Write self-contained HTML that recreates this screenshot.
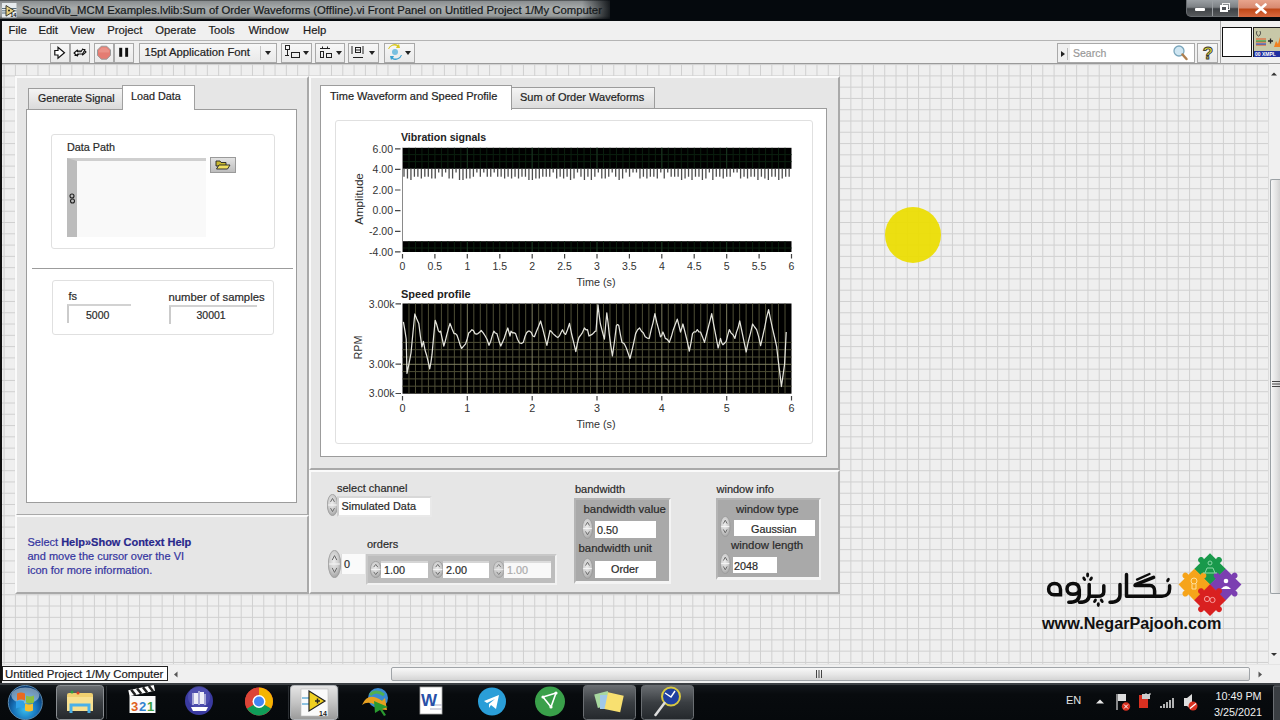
<!DOCTYPE html>
<html><head><meta charset="utf-8">
<style>
*{margin:0;padding:0;box-sizing:border-box}
html,body{width:1280px;height:720px;overflow:hidden;background:#05080b;font-family:"Liberation Sans",sans-serif;color:#222}
.a{position:absolute}
.t,.mi,.lbl{-webkit-text-stroke:0.2px currentColor}

.t{position:absolute;white-space:nowrap;line-height:1}
#title{left:0;top:0;width:1280px;height:21px;background:#05090d}
#glow{left:0;top:0;width:610px;height:19px;background:linear-gradient(180deg,#3c4042 0,#8c9092 8%,#a9adad 45%,#959999 85%,#4a4c4e 100%);}
#glowfade{left:582px;top:0;width:32px;height:19px;background:linear-gradient(90deg,rgba(5,9,13,0),#05090d)}
#menu{left:2px;top:21px;width:1218px;height:20px;background:#f0f0f0;border-bottom:1px solid #b4b4b4}
#tool{left:2px;top:41px;width:1218px;height:23px;background:#f0f0f0;border-bottom:1px solid #9a9a9a}
#iconarea{left:1220px;top:21px;width:60px;height:43px;background:#f0f0f0;border-left:1px solid #a8a8a8;border-bottom:1px solid #9a9a9a}
.tb{position:absolute;top:43px;height:20px;border:1px solid #a9a9a9;background:linear-gradient(#f7f7f7,#e9e9e9)}
#canvas{left:2px;top:64px;width:1266px;height:602px;background:#efefef;overflow:hidden}
.panel{position:absolute;background:#e6e6e6;border-top:2px solid #fafafa;border-left:2px solid #fafafa;border-right:2px solid #a9a9a9;border-bottom:2px solid #a9a9a9}
.page{position:absolute;background:#fff;border:1px solid #9c9c9c}
.tab{position:absolute;border:1px solid #9c9c9c;border-bottom:none;background:linear-gradient(#f4f4f4,#dadada);font-size:11px}
.tab.on{background:#fff}
.clus{position:absolute;border:1px solid #e0e0e0;border-radius:3px;background:#fff}
.mi{position:absolute;top:25px;font-size:11.3px;line-height:1;white-space:nowrap;color:#1c1c1c}
.spin{position:absolute;border-radius:50%;background:radial-gradient(ellipse at 40% 35%,#f4f4f4,#c9c9c9 60%,#9a9a9a);}
.lbl{position:absolute;white-space:nowrap;line-height:1;font-size:11px;color:#2a2a2a}
</style></head><body><svg width="0" height="0" style="position:absolute"><defs><radialGradient id="spg" cx="45%" cy="40%" r="65%"><stop offset="0" stop-color="#ececec"/><stop offset=".55" stop-color="#cdcdcd"/><stop offset="1" stop-color="#9c9c9c"/></radialGradient></defs></svg>
<!-- title bar -->
<div id="title" class="a"></div>
<div id="glow" class="a"></div>
<div id="glowfade" class="a"></div>
<div class="t" style="left:22px;top:4.8px;font-size:11.3px;color:#15191b">SoundVib_MCM Examples.lvlib:Sum of Order Waveforms (Offline).vi Front Panel on Untitled Project 1/My Computer</div>

<!-- menu and toolbar -->
<div id="menu" class="a"></div>
<div id="tool" class="a"></div>
<div id="iconarea" class="a"></div>
<div class="mi" style="left:8.5px">File</div>
<div class="mi" style="left:38.5px">Edit</div>
<div class="mi" style="left:70.3px">View</div>
<div class="mi" style="left:107.2px">Project</div>
<div class="mi" style="left:155.3px">Operate</div>
<div class="mi" style="left:208.4px">Tools</div>
<div class="mi" style="left:248.4px">Window</div>
<div class="mi" style="left:303px">Help</div>
<!-- toolbar buttons -->
<div class="tb" style="left:50px;width:20px"></div>
<div class="tb" style="left:70px;width:20px"></div>
<div class="tb" style="left:94px;width:20px"></div>
<div class="tb" style="left:114px;width:20px"></div>
<svg class="a" style="left:0;top:40px" width="440" height="26">
 <path d="M54.8 10.5h3.2v-3.3l6.5 5.5-6.5 5.6v-3.3h-3.2z" fill="#fff" stroke="#111" stroke-width="1.2" stroke-linejoin="miter"/>
 <g fill="#fff" stroke="#111" stroke-width="1.1" stroke-linejoin="round">
  <path d="M75 15.5l2.5-4.5h5v-2l3.5 3-3.5 3v-1.8h-3.5l-1.5 2.3z"/>
  <path d="M85 9.5l-2.5 4.5h-5v2l-3.5-3 3.5-3v1.8h3.5l1.5-2.3z"/>
 </g>
 <path d="M101.3 6.2h5.4l3.8 3.8v5.4l-3.8 3.8h-5.4l-3.8-3.8v-5.4z" fill="#e47c72" stroke="#9a9a9a" stroke-width="1"/>
 <path d="M101.8 7.5h4.4l3 3v2h-10.4v-2z" fill="#ec9a90" opacity=".7"/>
 <rect x="119.2" y="7.8" width="3" height="9" fill="#111"/><rect x="125.2" y="7.8" width="2.9" height="9" fill="#111"/>
</svg>
<svg class="a" style="left:2px;top:3px" width="15" height="15">
 <rect x="0" y="0" width="14.5" height="14.5" fill="#e6ebee"/>
 <path d="M0 5.5h14.5M0 7.8h14.5M0 10h5" stroke="#466070" stroke-width="0.9"/>
 <path d="M4 2.5l8.5 5.3-8.5 5.3z" fill="#e8d080" stroke="#2a2a20" stroke-width="0.9"/>
 <circle cx="7" cy="7.5" r="1" fill="#222"/>
 <text x="8.2" y="14.2" font-size="5.5" font-weight="bold" fill="#111" font-family="Liberation Sans">14</text>
</svg>
<div class="tb" style="left:139px;width:138px"></div>
<div class="a" style="left:259.5px;top:46px;width:1px;height:14px;background:#c4c4c4"></div>
<div class="t" style="left:144.5px;top:47px;font-size:11.3px;color:#222">15pt Application Font</div>
<div class="tb" style="left:281px;width:31px"></div>
<div class="tb" style="left:315px;width:30px"></div>
<div class="tb" style="left:348px;width:31px"></div>
<div class="tb" style="left:384px;width:31px"></div>
<svg class="a" style="left:0;top:40px" width="440" height="26">
 <path d="M265 11h6l-3 4z" fill="#222"/>
 <g fill="none" stroke="#222" stroke-width="1">
  <rect x="285.5" y="5.5" width="4" height="4"/><path d="M287.5 10v5M285 15.5h4"/><rect x="291.5" y="12.5" width="8" height="5"/>
  <path d="M320 8.5h10M322.5 8.5v-2M327.5 8.5v-2"/><rect x="320.5" y="11.5" width="3" height="6"/><rect x="326.5" y="13.5" width="5" height="4"/>
  <path d="M352 6v8M363 6v8M355 10h5M353 17.5h10"/><rect x="355.5" y="7.5" width="5" height="5"/>
 </g>
 <path d="M303 11h6l-3 4zM336 11h6l-3 4zM369 11h6l-3 4zM405 11h6l-3 4z" fill="#222"/>
 <path d="M389 9a6 6 0 0 1 8 -3l-1 2 4 0-1-4-1 1a7 7 0 0 0 -10 4z" fill="#d8c820"/>
 <path d="M401 15a6 6 0 0 1 -8 3l1-2-4 0 1 4 1-1a7 7 0 0 0 10 -4z" fill="#3aa0d0"/>
 <circle cx="395" cy="12" r="3" fill="#7ac0e0"/>
</svg>
<!-- search -->
<div class="a" style="left:1057px;top:43px;width:138px;height:20px;border:1px solid #a9a9a9;background:#fff"></div>
<div class="a" style="left:1058px;top:44px;width:12px;height:18px;background:#f0f0f0"></div>
<svg class="a" style="left:1056px;top:43px" width="170" height="22">
 <path d="M5 8v6l4-3z" fill="#222"/><path d="M11.5 5v12" stroke="#bbb"/>
 <circle cx="123" cy="8" r="5" fill="#cfe6f2" stroke="#7aa6bc" stroke-width="1.3"/>
 <path d="M126.5 11.5l4 4.5" stroke="#b08050" stroke-width="2.5" stroke-linecap="round"/>
</svg>
<div class="t" style="left:1073px;top:47.5px;font-size:10.5px;color:#999">Search</div>
<div class="tb" style="left:1197px;width:21px"></div>
<svg class="a" style="left:1197px;top:43px" width="22" height="20"><text x="11" y="16" font-size="17" font-weight="bold" text-anchor="middle" fill="#e8e030" stroke="#333" stroke-width="0.9" font-family="Liberation Sans">?</text></svg>
<!-- connector pane + icon -->
<div class="a" style="left:1222px;top:27px;width:30px;height:30px;background:#fff;border:1.5px solid #111"></div>
<div class="a" style="left:1253px;top:27px;width:27px;height:30px;background:#c8c8a8;border:1px solid #222;border-right:none"></div>
<div class="a" style="left:1254px;top:51px;width:26px;height:6px;background:#2030a0"></div>
<svg class="a" style="left:1253px;top:27px" width="27" height="30">
 <path d="M3 12h10M3 15h10M3 18h10" stroke="#e05020" stroke-width="1.2"/>
 <path d="M3 14h10" stroke="#30a040" stroke-width="1.2"/><path d="M3 17h10" stroke="#3050c0" stroke-width="1.2"/>
 <path d="M15 14h5M17.5 11.5v5" stroke="#222" stroke-width="1.3"/>
 <path d="M21 20l2-6 2 3 2-7v10z" fill="#f08020"/>
 <text x="2" y="29" font-size="5" fill="#fff" font-family="Liberation Sans" font-weight="bold">00 XMPL</text>
 <path d="M4 4a2 3 0 1 0 3 0" stroke="#333" fill="none" stroke-width="0.8"/>
</svg>
<!-- window buttons -->
<div class="a" style="left:1186px;top:0;width:94px;height:17px;border:1px solid #6a6e72;border-top:none;border-radius:0 0 0 5px;background:linear-gradient(#9ba0a4,#7c8084 45%,#3e4246 55%,#56595c)"></div>
<div class="a" style="left:1212px;top:0;width:1px;height:16px;background:#9a9ea2"></div>
<div class="a" style="left:1238px;top:0;width:42px;height:17px;border-left:1px solid #c9a090;background:linear-gradient(#e8a48c,#d88a70 45%,#c04818 55%,#d86a40)"></div>
<div class="a" style="left:1195px;top:8px;width:10px;height:3px;background:#fff;border-radius:1px"></div>
<div class="a" style="left:1222px;top:3px;width:8px;height:7px;border:1.5px solid #eee"></div>
<div class="a" style="left:1219.5px;top:5px;width:8px;height:7px;border:2px solid #fff;background:#50545a"></div>
<svg class="a" style="left:1255px;top:3px" width="12" height="11"><path d="M1.5 1.5l9 8M10.5 1.5l-9 8" stroke="#fff" stroke-width="2.6" stroke-linecap="round"/></svg>
<div class="a" style="left:0;top:21px;width:2px;height:662px;background:#111"></div>

<!-- canvas -->
<div id="canvas" class="a"><svg class="a" style="left:0;top:0" width="1266" height="602"><path stroke="#d0d0d0" stroke-width="1" fill="none" d="M2.10 0V602M13.39 0V602M24.68 0V602M35.97 0V602M47.26 0V602M58.55 0V602M69.84 0V602M81.13 0V602M92.42 0V602M103.71 0V602M115.00 0V602M126.29 0V602M137.58 0V602M148.87 0V602M160.16 0V602M171.45 0V602M182.74 0V602M194.03 0V602M205.32 0V602M216.61 0V602M227.90 0V602M239.19 0V602M250.48 0V602M261.77 0V602M273.06 0V602M284.35 0V602M295.64 0V602M306.93 0V602M318.22 0V602M329.51 0V602M340.80 0V602M352.09 0V602M363.38 0V602M374.67 0V602M385.96 0V602M397.25 0V602M408.54 0V602M419.83 0V602M431.12 0V602M442.41 0V602M453.70 0V602M464.99 0V602M476.28 0V602M487.57 0V602M498.86 0V602M510.15 0V602M521.44 0V602M532.73 0V602M544.02 0V602M555.31 0V602M566.60 0V602M577.89 0V602M589.18 0V602M600.47 0V602M611.76 0V602M623.05 0V602M634.34 0V602M645.63 0V602M656.92 0V602M668.21 0V602M679.50 0V602M690.79 0V602M702.08 0V602M713.37 0V602M724.66 0V602M735.95 0V602M747.24 0V602M758.53 0V602M769.82 0V602M781.11 0V602M792.40 0V602M803.69 0V602M814.98 0V602M826.27 0V602M837.56 0V602M848.85 0V602M860.14 0V602M871.43 0V602M882.72 0V602M894.01 0V602M905.30 0V602M916.59 0V602M927.88 0V602M939.17 0V602M950.46 0V602M961.75 0V602M973.04 0V602M984.33 0V602M995.62 0V602M1006.91 0V602M1018.20 0V602M1029.49 0V602M1040.78 0V602M1052.07 0V602M1063.36 0V602M1074.65 0V602M1085.94 0V602M1097.23 0V602M1108.52 0V602M1119.81 0V602M1131.10 0V602M1142.39 0V602M1153.68 0V602M1164.97 0V602M1176.26 0V602M1187.55 0V602M1198.84 0V602M1210.13 0V602M1221.42 0V602M1232.71 0V602M1244.00 0V602M1255.29 0V602M0 0.60H1266M0 11.88H1266M0 23.16H1266M0 34.44H1266M0 45.72H1266M0 57.00H1266M0 68.28H1266M0 79.56H1266M0 90.84H1266M0 102.12H1266M0 113.40H1266M0 124.68H1266M0 135.96H1266M0 147.24H1266M0 158.52H1266M0 169.80H1266M0 181.08H1266M0 192.36H1266M0 203.64H1266M0 214.92H1266M0 226.20H1266M0 237.48H1266M0 248.76H1266M0 260.04H1266M0 271.32H1266M0 282.60H1266M0 293.88H1266M0 305.16H1266M0 316.44H1266M0 327.72H1266M0 339.00H1266M0 350.28H1266M0 361.56H1266M0 372.84H1266M0 384.12H1266M0 395.40H1266M0 406.68H1266M0 417.96H1266M0 429.24H1266M0 440.52H1266M0 451.80H1266M0 463.08H1266M0 474.36H1266M0 485.64H1266M0 496.92H1266M0 508.20H1266M0 519.48H1266M0 530.76H1266M0 542.04H1266M0 553.32H1266M0 564.60H1266M0 575.88H1266M0 587.16H1266M0 598.44H1266"/></svg></div>


<!-- LEFT PANEL -->
<div class="panel" style="left:15px;top:75.5px;width:294px;height:440.5px"></div>
<div class="tab" style="left:28px;top:88px;width:95px;height:21px;"></div>
<div class="t" style="left:38px;top:93px;font-size:10.6px;color:#1e1e1e">Generate Signal</div>
<div class="page" style="left:26px;top:109px;width:271px;height:394px"></div>
<div class="tab on" style="left:122px;top:85px;width:73px;height:25px;border-color:#a0a0a0"></div>
<div class="t" style="left:131px;top:91px;font-size:10.8px;color:#1e1e1e">Load Data</div>

<!-- left page contents -->
<div class="clus" style="left:50.5px;top:133.5px;width:224px;height:115px"></div>
<div class="lbl" style="left:67px;top:142px;font-size:10.8px">Data Path</div>
<div class="a" style="left:67px;top:158px;width:139px;height:78.5px;background:#f9f9f9;border-top:3px solid #cfcfcf;border-left:10px solid #bcbcbc"></div>
<svg class="a" style="left:68px;top:191.5px" width="8" height="16"><circle cx="4" cy="4" r="2" fill="none" stroke="#222" stroke-width="1.1"/><circle cx="4.5" cy="9" r="2" fill="none" stroke="#222" stroke-width="1.1"/></svg>
<div class="a" style="left:210px;top:157px;width:26px;height:15.5px;border:1px solid #9a9a9a;background:linear-gradient(#e2e2e2,#bdbdbd)"></div>
<svg class="a" style="left:210px;top:157px" width="26" height="16"><path d="M6 4h4l1 1.5h5v3.5h-10z" fill="#c8b830" stroke="#222" stroke-width="0.9"/><path d="M6.5 12l2.5-4h11l-2.5 4z" fill="#f0e060" stroke="#222" stroke-width="0.9"/></svg>
<div class="a" style="left:32px;top:267.5px;width:261px;height:1.2px;background:#9c9c9c"></div>
<div class="clus" style="left:51.5px;top:280px;width:222.5px;height:55px"></div>
<div class="lbl" style="left:68.5px;top:291px;font-size:11px">fs</div>
<div class="a" style="left:67px;top:304px;width:64px;height:19px;border-top:2.5px solid #d2d2d2;border-left:2.5px solid #cbcbcb;background:#fff"></div>
<div class="lbl" style="left:86px;top:309.5px;font-size:10.5px">5000</div>
<div class="lbl" style="left:168.5px;top:292px;font-size:11.3px">number of samples</div>
<div class="a" style="left:168.5px;top:305px;width:88px;height:19px;border-top:2.5px solid #d2d2d2;border-left:2.5px solid #cbcbcb;background:#fff"></div>
<div class="lbl" style="left:196.5px;top:310px;font-size:10.5px">30001</div>

<!-- HELP PANEL -->
<div class="panel" style="left:15px;top:515px;width:294px;height:79px"></div>

<!-- CHART PANEL -->
<div class="panel" style="left:309px;top:75.5px;width:531px;height:394.5px"></div>
<div class="tab" style="left:511px;top:87px;width:144px;height:22px"></div>
<div class="t" style="left:520px;top:92px;font-size:11px;color:#1e1e1e">Sum of Order Waveforms</div>
<div class="page" style="left:320px;top:108px;width:507px;height:349px"></div>
<div class="tab on" style="left:320px;top:85px;width:192px;height:25px"></div>
<div class="t" style="left:330px;top:90.5px;font-size:11px;color:#1e1e1e">Time Waveform and Speed Profile</div>
<div class="clus" style="left:335px;top:120px;width:478px;height:324px"></div>

<!-- CONTROLS PANEL -->
<div class="panel" style="left:309px;top:470px;width:531px;height:124px"></div>
<div class="t" style="left:27.5px;top:534.8px;font-size:11px;line-height:14px;color:#3434a0">Select <b style="color:#28288c">Help&raquo;Show Context Help</b><br>and move the cursor over the VI<br>icon for more information.</div>
<div class="lbl" style="left:337px;top:483px;font-size:11px">select channel</div>
<svg class="a" style="left:326.5px;top:494.0px;" width="11.0" height="22.0"><ellipse cx="5.50" cy="11.00" rx="5.20" ry="10.70" fill="url(#spg)" stroke="#9a9a9a" stroke-width=".8"/><path d="M1.20 11.00H9.80" stroke="#f4f4f4" stroke-width="1.2"/><path d="M3.52 7.92l1.98 -3.52 l1.98 3.52" fill="none" stroke="#6a6a6a" stroke-width="1"/><path d="M3.52 14.08l1.98 3.52 l1.98 -3.52" fill="none" stroke="#6a6a6a" stroke-width="1"/></svg>
<div class="a" style="left:337px;top:495.5px;width:95px;height:21.5px;background:#fff;border:2px solid #e9e9e9;border-top:2px solid #d8d8d8;border-left:2px solid #d0d0d0"></div>
<div class="lbl" style="left:341.5px;top:501px;font-size:10.9px">Simulated Data</div>
<div class="lbl" style="left:367px;top:538.5px;font-size:11px">orders</div>
<svg class="a" style="left:327.5px;top:550.0px;" width="13.0" height="28.0"><ellipse cx="6.50" cy="14.00" rx="6.20" ry="13.70" fill="url(#spg)" stroke="#9a9a9a" stroke-width=".8"/><path d="M1.20 14.00H11.80" stroke="#f4f4f4" stroke-width="1.2"/><path d="M4.16 10.08l2.34 -4.48 l2.34 4.48" fill="none" stroke="#6a6a6a" stroke-width="1"/><path d="M4.16 17.92l2.34 4.48 l2.34 -4.48" fill="none" stroke="#6a6a6a" stroke-width="1"/></svg>
<div class="a" style="left:341px;top:554px;width:24px;height:20px;background:#fafafa;border-left:1px solid #ddd"></div>
<div class="lbl" style="left:344px;top:558.5px;font-size:10.8px">0</div>
<div class="a" style="left:366px;top:553.5px;width:191px;height:31px;background:#bdbdbd;border:2px solid #c8c8c8;border-right-color:#f2f2f2;border-bottom-color:#f2f2f2"></div>
<svg class="a" style="left:369.5px;top:561.0px;" width="11.5" height="17.0"><ellipse cx="5.75" cy="8.50" rx="5.45" ry="8.20" fill="url(#spg)" stroke="#9a9a9a" stroke-width=".8"/><path d="M1.20 8.50H10.30" stroke="#f4f4f4" stroke-width="1.2"/><path d="M3.68 6.12l2.07 -2.72 l2.07 2.72" fill="none" stroke="#6a6a6a" stroke-width="1"/><path d="M3.68 10.88l2.07 2.72 l2.07 -2.72" fill="none" stroke="#6a6a6a" stroke-width="1"/></svg>
<div class="a" style="left:381px;top:561px;width:47px;height:17px;background:#fff;border-top:2px solid #d5d5d5"></div>
<div class="lbl" style="left:384px;top:564.5px;font-size:10.8px">1.00</div>
<svg class="a" style="left:431.5px;top:561.0px;" width="11.5" height="17.0"><ellipse cx="5.75" cy="8.50" rx="5.45" ry="8.20" fill="url(#spg)" stroke="#9a9a9a" stroke-width=".8"/><path d="M1.20 8.50H10.30" stroke="#f4f4f4" stroke-width="1.2"/><path d="M3.68 6.12l2.07 -2.72 l2.07 2.72" fill="none" stroke="#6a6a6a" stroke-width="1"/><path d="M3.68 10.88l2.07 2.72 l2.07 -2.72" fill="none" stroke="#6a6a6a" stroke-width="1"/></svg>
<div class="a" style="left:443px;top:561px;width:46px;height:17px;background:#fff;border-top:2px solid #d5d5d5"></div>
<div class="lbl" style="left:446px;top:564.5px;font-size:10.8px">2.00</div>
<svg class="a" style="left:492.5px;top:561.0px;opacity:.75;" width="11.5" height="17.0"><ellipse cx="5.75" cy="8.50" rx="5.45" ry="8.20" fill="url(#spg)" stroke="#9a9a9a" stroke-width=".8"/><path d="M1.20 8.50H10.30" stroke="#f4f4f4" stroke-width="1.2"/><path d="M3.68 6.12l2.07 -2.72 l2.07 2.72" fill="none" stroke="#6a6a6a" stroke-width="1"/><path d="M3.68 10.88l2.07 2.72 l2.07 -2.72" fill="none" stroke="#6a6a6a" stroke-width="1"/></svg>
<div class="a" style="left:504px;top:561px;width:46.5px;height:17px;background:#f8f8f8;border-top:2px solid #dcdcdc"></div>
<div class="lbl" style="left:507px;top:564.5px;font-size:10.8px;color:#aaa">1.00</div>

<div class="lbl" style="left:575px;top:483.5px;font-size:11px">bandwidth</div>
<div class="a" style="left:573.5px;top:497.5px;width:97px;height:86px;background:#a9a9a9;border:2px solid #b4b4b4;border-right:2.5px solid #f4f4f4;border-bottom:3px solid #f4f4f4"></div>
<div class="lbl" style="left:583.5px;top:503.5px;font-size:11.4px">bandwidth value</div>
<svg class="a" style="left:582.0px;top:518.0px;" width="11.0" height="21.0"><ellipse cx="5.50" cy="10.50" rx="5.20" ry="10.20" fill="url(#spg)" stroke="#9a9a9a" stroke-width=".8"/><path d="M1.20 10.50H9.80" stroke="#f4f4f4" stroke-width="1.2"/><path d="M3.52 7.56l1.98 -3.36 l1.98 3.36" fill="none" stroke="#6a6a6a" stroke-width="1"/><path d="M3.52 13.44l1.98 3.36 l1.98 -3.36" fill="none" stroke="#6a6a6a" stroke-width="1"/></svg>
<div class="a" style="left:595px;top:521px;width:61px;height:17px;background:#fff"></div>
<div class="lbl" style="left:597px;top:525px;font-size:10.8px">0.50</div>
<div class="lbl" style="left:578.5px;top:543px;font-size:11.4px">bandwidth unit</div>
<svg class="a" style="left:582.0px;top:558.0px;" width="11.0" height="21.0"><ellipse cx="5.50" cy="10.50" rx="5.20" ry="10.20" fill="url(#spg)" stroke="#9a9a9a" stroke-width=".8"/><path d="M1.20 10.50H9.80" stroke="#f4f4f4" stroke-width="1.2"/><path d="M3.52 7.56l1.98 -3.36 l1.98 3.36" fill="none" stroke="#6a6a6a" stroke-width="1"/><path d="M3.52 13.44l1.98 3.36 l1.98 -3.36" fill="none" stroke="#6a6a6a" stroke-width="1"/></svg>
<div class="a" style="left:595px;top:561px;width:61px;height:16.5px;background:#fff"></div>
<div class="lbl" style="left:611px;top:564px;font-size:10.8px">Order</div>

<div class="lbl" style="left:716.5px;top:483.5px;font-size:11px">window info</div>
<div class="a" style="left:715.5px;top:497.5px;width:105px;height:82px;background:#a9a9a9;border:2px solid #b4b4b4;border-right:2.5px solid #f4f4f4;border-bottom:3px solid #f4f4f4"></div>
<div class="lbl" style="left:736px;top:503.5px;font-size:11.4px">window type</div>
<svg class="a" style="left:720.0px;top:516.0px;" width="10.5" height="21.0"><ellipse cx="5.25" cy="10.50" rx="4.95" ry="10.20" fill="url(#spg)" stroke="#9a9a9a" stroke-width=".8"/><path d="M1.20 10.50H9.30" stroke="#f4f4f4" stroke-width="1.2"/><path d="M3.36 7.56l1.89 -3.36 l1.89 3.36" fill="none" stroke="#6a6a6a" stroke-width="1"/><path d="M3.36 13.44l1.89 3.36 l1.89 -3.36" fill="none" stroke="#6a6a6a" stroke-width="1"/></svg>
<div class="a" style="left:734px;top:519.5px;width:81px;height:16.5px;background:#fff"></div>
<div class="lbl" style="left:751px;top:523.5px;font-size:10.8px">Gaussian</div>
<div class="lbl" style="left:731px;top:540px;font-size:11.4px">window length</div>
<svg class="a" style="left:720.0px;top:552.5px;" width="10.5" height="21.0"><ellipse cx="5.25" cy="10.50" rx="4.95" ry="10.20" fill="url(#spg)" stroke="#9a9a9a" stroke-width=".8"/><path d="M1.20 10.50H9.30" stroke="#f4f4f4" stroke-width="1.2"/><path d="M3.36 7.56l1.89 -3.36 l1.89 3.36" fill="none" stroke="#6a6a6a" stroke-width="1"/><path d="M3.36 13.44l1.89 3.36 l1.89 -3.36" fill="none" stroke="#6a6a6a" stroke-width="1"/></svg>
<div class="a" style="left:733px;top:556.5px;width:44px;height:16.5px;background:#fff"></div>
<div class="lbl" style="left:734px;top:561px;font-size:10.8px">2048</div>

<svg class="a" style="left:0;top:0" width="1280" height="720" font-family="Liberation Sans" >
<rect x="402.5" y="147.8" width="389.0" height="21.0" fill="#000"/>
<rect x="402.5" y="241.2" width="389.0" height="10.8" fill="#000"/>
<path d="M408.98 147.8V168.6M408.98 241.2V252.0M415.47 147.8V168.6M415.47 241.2V252.0M421.95 147.8V168.6M421.95 241.2V252.0M428.43 147.8V168.6M428.43 241.2V252.0M434.92 147.8V168.6M434.92 241.2V252.0M441.40 147.8V168.6M441.40 241.2V252.0M447.88 147.8V168.6M447.88 241.2V252.0M454.37 147.8V168.6M454.37 241.2V252.0M460.85 147.8V168.6M460.85 241.2V252.0M467.33 147.8V168.6M467.33 241.2V252.0M473.82 147.8V168.6M473.82 241.2V252.0M480.30 147.8V168.6M480.30 241.2V252.0M486.78 147.8V168.6M486.78 241.2V252.0M493.27 147.8V168.6M493.27 241.2V252.0M499.75 147.8V168.6M499.75 241.2V252.0M506.23 147.8V168.6M506.23 241.2V252.0M512.72 147.8V168.6M512.72 241.2V252.0M519.20 147.8V168.6M519.20 241.2V252.0M525.68 147.8V168.6M525.68 241.2V252.0M532.17 147.8V168.6M532.17 241.2V252.0M538.65 147.8V168.6M538.65 241.2V252.0M545.13 147.8V168.6M545.13 241.2V252.0M551.62 147.8V168.6M551.62 241.2V252.0M558.10 147.8V168.6M558.10 241.2V252.0M564.58 147.8V168.6M564.58 241.2V252.0M571.07 147.8V168.6M571.07 241.2V252.0M577.55 147.8V168.6M577.55 241.2V252.0M584.03 147.8V168.6M584.03 241.2V252.0M590.52 147.8V168.6M590.52 241.2V252.0M597.00 147.8V168.6M597.00 241.2V252.0M603.48 147.8V168.6M603.48 241.2V252.0M609.97 147.8V168.6M609.97 241.2V252.0M616.45 147.8V168.6M616.45 241.2V252.0M622.93 147.8V168.6M622.93 241.2V252.0M629.42 147.8V168.6M629.42 241.2V252.0M635.90 147.8V168.6M635.90 241.2V252.0M642.38 147.8V168.6M642.38 241.2V252.0M648.87 147.8V168.6M648.87 241.2V252.0M655.35 147.8V168.6M655.35 241.2V252.0M661.83 147.8V168.6M661.83 241.2V252.0M668.32 147.8V168.6M668.32 241.2V252.0M674.80 147.8V168.6M674.80 241.2V252.0M681.28 147.8V168.6M681.28 241.2V252.0M687.77 147.8V168.6M687.77 241.2V252.0M694.25 147.8V168.6M694.25 241.2V252.0M700.73 147.8V168.6M700.73 241.2V252.0M707.22 147.8V168.6M707.22 241.2V252.0M713.70 147.8V168.6M713.70 241.2V252.0M720.18 147.8V168.6M720.18 241.2V252.0M726.67 147.8V168.6M726.67 241.2V252.0M733.15 147.8V168.6M733.15 241.2V252.0M739.63 147.8V168.6M739.63 241.2V252.0M746.12 147.8V168.6M746.12 241.2V252.0M752.60 147.8V168.6M752.60 241.2V252.0M759.08 147.8V168.6M759.08 241.2V252.0M765.57 147.8V168.6M765.57 241.2V252.0M772.05 147.8V168.6M772.05 241.2V252.0M778.53 147.8V168.6M778.53 241.2V252.0M785.02 147.8V168.6M785.02 241.2V252.0M402.5 154.6H791.5M402.5 161.6H791.5M402.5 248.0H791.5" stroke="#0b1f0f" stroke-width="1" fill="none"/>
<path d="M467.33 147.8V168.6M467.33 241.2V252.0M532.17 147.8V168.6M532.17 241.2V252.0M597.00 147.8V168.6M597.00 241.2V252.0M661.83 147.8V168.6M661.83 241.2V252.0M726.67 147.8V168.6M726.67 241.2V252.0" stroke="#1a3520" stroke-width="1" fill="none"/>
<path d="M404.00 168.4V176.8M407.47 168.4V178.6M410.94 168.4V179.9M414.41 168.4V176.8M417.88 168.4V176.8M421.35 168.4V178.6M424.82 168.4V176.8M428.29 168.4V176.8M431.76 168.4V178.6M435.23 168.4V178.6M438.70 168.4V172.6M442.17 168.4V176.8M445.64 168.4V172.6M449.11 168.4V178.6M452.58 168.4V178.6M456.05 168.4V172.6M459.52 168.4V179.9M462.99 168.4V179.9M466.46 168.4V178.6M469.93 168.4V178.6M473.40 168.4V176.8M476.87 168.4V172.6M480.34 168.4V176.8M483.81 168.4V172.6M487.28 168.4V176.8M490.75 168.4V176.8M494.22 168.4V172.6M497.69 168.4V176.8M501.16 168.4V176.8M504.63 168.4V178.6M508.10 168.4V176.8M511.57 168.4V178.6M515.04 168.4V176.8M518.51 168.4V178.6M521.98 168.4V176.8M525.45 168.4V176.8M528.92 168.4V179.9M532.39 168.4V179.9M535.86 168.4V178.6M539.33 168.4V178.6M542.80 168.4V176.8M546.27 168.4V176.8M549.74 168.4V176.8M553.21 168.4V172.6M556.68 168.4V178.6M560.15 168.4V176.8M563.62 168.4V178.6M567.09 168.4V176.8M570.56 168.4V179.9M574.03 168.4V178.6M577.50 168.4V172.6M580.97 168.4V176.8M584.44 168.4V179.9M587.91 168.4V176.8M591.38 168.4V179.9M594.85 168.4V176.8M598.32 168.4V172.6M601.79 168.4V178.6M605.26 168.4V178.6M608.73 168.4V176.8M612.20 168.4V172.6M615.67 168.4V176.8M619.14 168.4V179.9M622.61 168.4V178.6M626.08 168.4V172.6M629.55 168.4V176.8M633.02 168.4V172.6M636.49 168.4V172.6M639.96 168.4V178.6M643.43 168.4V176.8M646.90 168.4V178.6M650.37 168.4V176.8M653.84 168.4V176.8M657.31 168.4V178.6M660.78 168.4V172.6M664.25 168.4V178.6M667.72 168.4V172.6M671.19 168.4V176.8M674.66 168.4V176.8M678.13 168.4V176.8M681.60 168.4V179.9M685.07 168.4V178.6M688.54 168.4V176.8M692.01 168.4V179.9M695.48 168.4V176.8M698.95 168.4V176.8M702.42 168.4V179.9M705.89 168.4V178.6M709.36 168.4V172.6M712.83 168.4V179.9M716.30 168.4V176.8M719.77 168.4V176.8M723.24 168.4V178.6M726.71 168.4V176.8M730.18 168.4V176.8M733.65 168.4V172.6M737.12 168.4V172.6M740.59 168.4V178.6M744.06 168.4V176.8M747.53 168.4V178.6M751.00 168.4V176.8M754.47 168.4V176.8M757.94 168.4V179.9M761.41 168.4V176.8M764.88 168.4V178.6M768.35 168.4V179.9M771.82 168.4V176.8M775.29 168.4V176.8M778.76 168.4V179.9M782.23 168.4V178.6M785.70 168.4V176.8M789.17 168.4V176.8" stroke="#4e4e4e" stroke-width="1.3" fill="none"/>
<path d="M402.5 147.8V252.0" stroke="#8a8a8a" stroke-width="1"/>
<text x="393" y="152.6" font-size="10.5" fill="#333" text-anchor="end">6.00</text>
<text x="393" y="173.2" font-size="10.5" fill="#333" text-anchor="end">4.00</text>
<text x="393" y="193.8" font-size="10.5" fill="#333" text-anchor="end">2.00</text>
<text x="393" y="214.4" font-size="10.5" fill="#333" text-anchor="end">0.00</text>
<text x="393" y="235.1" font-size="10.5" fill="#333" text-anchor="end">-2.00</text>
<text x="393" y="255.7" font-size="10.5" fill="#333" text-anchor="end">-4.00</text>
<path d="M395 148.8H400.5M395 169.4H400.5M395 190.0H400.5M395 210.6H400.5M395 231.3H400.5M395 251.9H400.5" stroke="#444" stroke-width="1.2"/>
<text x="402.5" y="269.5" font-size="10.5" fill="#333" text-anchor="middle">0</text>
<text x="434.9" y="269.5" font-size="10.5" fill="#333" text-anchor="middle">0.5</text>
<text x="467.3" y="269.5" font-size="10.5" fill="#333" text-anchor="middle">1</text>
<text x="499.8" y="269.5" font-size="10.5" fill="#333" text-anchor="middle">1.5</text>
<text x="532.2" y="269.5" font-size="10.5" fill="#333" text-anchor="middle">2</text>
<text x="564.6" y="269.5" font-size="10.5" fill="#333" text-anchor="middle">2.5</text>
<text x="597.0" y="269.5" font-size="10.5" fill="#333" text-anchor="middle">3</text>
<text x="629.4" y="269.5" font-size="10.5" fill="#333" text-anchor="middle">3.5</text>
<text x="661.8" y="269.5" font-size="10.5" fill="#333" text-anchor="middle">4</text>
<text x="694.2" y="269.5" font-size="10.5" fill="#333" text-anchor="middle">4.5</text>
<text x="726.7" y="269.5" font-size="10.5" fill="#333" text-anchor="middle">5</text>
<text x="759.1" y="269.5" font-size="10.5" fill="#333" text-anchor="middle">5.5</text>
<text x="791.5" y="269.5" font-size="10.5" fill="#333" text-anchor="middle">6</text>
<path d="M402.5 254V258.5M434.9 254V258.5M467.3 254V258.5M499.8 254V258.5M532.2 254V258.5M564.6 254V258.5M597.0 254V258.5M629.4 254V258.5M661.8 254V258.5M694.2 254V258.5M726.7 254V258.5M759.1 254V258.5M791.5 254V258.5" stroke="#444" stroke-width="1.2"/>
<text x="401" y="141.2" font-size="10.6" font-weight="bold" fill="#222">Vibration signals</text>
<text x="596" y="285.5" font-size="10.8" fill="#333" text-anchor="middle">Time (s)</text>
<text transform="translate(363.3,199) rotate(-90)" font-size="11.6" fill="#2e2e2e" text-anchor="middle">Amplitude</text>
<rect x="402.5" y="303.5" width="389.0" height="90.2" fill="#000"/>
<path d="M408.98 303.5V393.7M415.47 303.5V393.7M421.95 303.5V393.7M428.43 303.5V393.7M434.92 303.5V393.7M441.40 303.5V393.7M447.88 303.5V393.7M454.37 303.5V393.7M460.85 303.5V393.7M473.82 303.5V393.7M480.30 303.5V393.7M486.78 303.5V393.7M493.27 303.5V393.7M499.75 303.5V393.7M506.23 303.5V393.7M512.72 303.5V393.7M519.20 303.5V393.7M525.68 303.5V393.7M538.65 303.5V393.7M545.13 303.5V393.7M551.62 303.5V393.7M558.10 303.5V393.7M564.58 303.5V393.7M571.07 303.5V393.7M577.55 303.5V393.7M584.03 303.5V393.7M590.52 303.5V393.7M603.48 303.5V393.7M609.97 303.5V393.7M616.45 303.5V393.7M622.93 303.5V393.7M629.42 303.5V393.7M635.90 303.5V393.7M642.38 303.5V393.7M648.87 303.5V393.7M655.35 303.5V393.7M668.32 303.5V393.7M674.80 303.5V393.7M681.28 303.5V393.7M687.77 303.5V393.7M694.25 303.5V393.7M700.73 303.5V393.7M707.22 303.5V393.7M713.70 303.5V393.7M720.18 303.5V393.7M733.15 303.5V393.7M739.63 303.5V393.7M746.12 303.5V393.7M752.60 303.5V393.7M759.08 303.5V393.7M765.57 303.5V393.7M772.05 303.5V393.7M778.53 303.5V393.7M785.02 303.5V393.7M402.5 342.4H791.5M402.5 349.7H791.5M402.5 357.0H791.5M402.5 371.6H791.5M402.5 378.9H791.5M402.5 386.2H791.5" stroke="#4e4e36" stroke-width="1" fill="none"/>
<path d="M467.33 303.5V393.7M532.17 303.5V393.7M597.00 303.5V393.7M661.83 303.5V393.7M726.67 303.5V393.7M402.5 364.3H791.5" stroke="#7e7e60" stroke-width="1" fill="none"/>
<path d="M403.4 321.9 L404.8 329.8 L406.2 339.0 L407.0 373.4 L408.6 365.6 L409.8 359.4 L411.0 353.0 L412.9 333.2 L414.8 314.0 L416.8 318.9 L418.8 323.4 L420.3 335.5 L421.9 346.9 L423.4 341.4 L425.0 350.0 L426.6 355.2 L428.1 361.3 L429.7 368.8 L430.9 362.5 L432.0 354.7 L433.6 336.9 L435.2 320.3 L436.8 324.8 L438.3 330.5 L439.5 332.1 L440.6 331.2 L442.2 338.6 L443.8 346.0 L445.3 341.0 L446.9 334.4 L448.4 328.8 L450.0 323.4 L452.0 328.8 L454.0 333.6 L455.5 333.6 L457.0 335.2 L458.6 339.9 L460.1 344.9 L461.7 348.4 L463.6 346.1 L465.6 343.8 L467.2 338.9 L468.8 332.8 L470.3 331.7 L471.9 329.7 L473.4 330.6 L475.0 333.6 L476.5 334.2 L478.0 333.6 L479.6 332.3 L481.2 330.5 L483.2 332.8 L485.2 336.0 L487.1 339.5 L489.0 345.3 L490.6 341.5 L492.2 335.9 L493.8 331.2 L495.3 333.0 L496.9 333.6 L498.9 340.7 L500.8 346.0 L502.6 342.0 L504.3 338.0 L506.1 332.2 L507.8 328.0 L510.0 336.0 L511.0 331.2 L512.5 332.8 L514.1 332.7 L515.6 333.6 L517.5 339.3 L519.5 343.0 L521.5 343.5 L523.4 342.2 L525.0 336.5 L526.6 332.8 L528.2 331.2 L529.7 331.2 L531.3 332.4 L532.8 336.0 L534.4 336.7 L536.5 331.3 L538.5 326.5 L540.6 321.0 L542.7 328.6 L544.8 337.2 L546.9 345.3 L548.5 337.6 L550.0 330.5 L551.5 331.7 L553.0 333.6 L554.6 335.1 L556.2 336.4 L557.8 337.5 L559.4 335.9 L560.9 332.7 L562.5 329.7 L564.0 333.1 L565.6 334.4 L567.5 329.8 L569.5 323.4 L571.6 334.0 L573.7 342.6 L575.8 351.6 L577.3 343.7 L578.9 337.5 L580.7 335.2 L582.6 332.3 L584.4 328.0 L586.0 329.8 L587.5 329.7 L589.0 336.0 L590.6 335.1 L592.2 334.4 L593.8 332.8 L594.9 331.3 L596.0 331.2 L598.0 304.8 L599.2 315.2 L600.4 324.0 L602.4 331.8 L604.4 339.2 L605.6 325.5 L606.8 312.8 L608.0 322.2 L609.2 333.6 L610.8 345.6 L612.4 356.0 L614.4 342.0 L616.4 325.6 L617.6 324.6 L618.8 325.6 L620.4 334.7 L622.0 342.4 L623.2 343.0 L624.4 344.0 L626.3 348.0 L628.1 353.2 L630.0 358.5 L631.9 350.8 L633.7 342.8 L635.6 333.6 L637.6 329.7 L639.6 328.0 L641.5 331.2 L643.3 332.8 L645.2 336.8 L647.2 338.1 L649.3 338.4 L651.2 329.7 L653.0 322.8 L654.9 313.6 L656.8 322.5 L658.6 329.1 L660.5 336.8 L661.7 335.6 L662.9 332.0 L664.1 334.7 L665.3 338.4 L667.3 339.4 L669.3 342.4 L671.3 336.8 L673.3 329.7 L675.3 324.3 L677.3 319.2 L678.9 325.4 L680.5 332.0 L681.7 328.3 L682.9 324.0 L685.0 332.2 L687.2 341.0 L689.3 351.2 L690.9 343.3 L692.5 333.6 L694.1 331.8 L695.7 332.0 L697.3 329.6 L698.9 331.8 L700.5 332.0 L702.5 336.9 L704.5 342.4 L706.3 335.1 L708.1 328.0 L709.9 321.1 L711.7 313.6 L713.8 325.3 L716.0 336.7 L718.1 348.0 L719.3 343.5 L720.5 338.4 L721.7 342.7 L722.9 344.8 L724.5 343.2 L726.1 341.6 L727.7 335.4 L729.3 329.6 L731.2 333.1 L733.0 334.8 L734.9 338.4 L736.5 332.1 L738.1 327.8 L739.7 320.8 L741.9 331.3 L744.0 341.7 L746.2 352.0 L748.3 341.5 L750.5 333.1 L752.6 324.0 L754.6 327.0 L756.6 329.6 L758.6 336.4 L760.6 345.6 L762.6 336.9 L764.6 327.9 L766.6 317.5 L768.6 309.6 L770.6 319.5 L772.6 328.8 L774.6 337.5 L776.6 346.4 L778.2 360.2 L779.8 372.8 L781.4 386.5 L783.0 375.7 L784.6 364.0 L786.2 332.0" stroke="#e4e4dc" stroke-width="1.25" fill="none" stroke-linejoin="round"/>
<text x="394.5" y="307.6" font-size="10.5" fill="#333" text-anchor="end">3.00k</text>
<text x="394.5" y="368.0" font-size="10.5" fill="#333" text-anchor="end">3.00k</text>
<text x="394.5" y="397.3" font-size="10.5" fill="#333" text-anchor="end">3.00k</text>
<path d="M395.5 303.8H401M395.5 364.2H401M395.5 393.5H401" stroke="#444" stroke-width="1.2"/>
<text x="402.5" y="411.5" font-size="10.8" fill="#333" text-anchor="middle">0</text>
<text x="467.3" y="411.5" font-size="10.8" fill="#333" text-anchor="middle">1</text>
<text x="532.2" y="411.5" font-size="10.8" fill="#333" text-anchor="middle">2</text>
<text x="597.0" y="411.5" font-size="10.8" fill="#333" text-anchor="middle">3</text>
<text x="661.8" y="411.5" font-size="10.8" fill="#333" text-anchor="middle">4</text>
<text x="726.7" y="411.5" font-size="10.8" fill="#333" text-anchor="middle">5</text>
<text x="791.5" y="411.5" font-size="10.8" fill="#333" text-anchor="middle">6</text>
<path d="M402.5 396V400.5M467.3 396V400.5M532.2 396V400.5M597.0 396V400.5M661.8 396V400.5M726.7 396V400.5M791.5 396V400.5" stroke="#444" stroke-width="1.2"/>
<text x="401" y="298" font-size="11" font-weight="bold" fill="#222">Speed profile</text>
<text x="596" y="427.5" font-size="10.8" fill="#333" text-anchor="middle">Time (s)</text>
<text transform="translate(362,347.5) rotate(-90)" font-size="10.8" fill="#333" text-anchor="middle">RPM</text>
</svg>
<!-- yellow circle -->
<div class="a" style="left:884.5px;top:207px;width:56px;height:56px;border-radius:50%;background:rgba(236,222,0,0.93)"></div>
<!-- logo -->
<svg class="a" style="left:0;top:0" width="1280" height="720" font-family="Liberation Sans">
<path transform="translate(1210.0 569.0) rotate(45)" d="M-11.2 -11.2 L-2.6 -11.2 A3.0 3.0 0 1 1 2.6 -11.2 L11.2 -11.2 L11.2 -2.6 A3.0 3.0 0 1 1 11.2 2.6 L11.2 11.2 L2.6 11.2 A3.0 3.0 0 1 1 -2.6 11.2 L-11.2 11.2 L-11.2 2.6 A3.0 3.0 0 1 1 -11.2 -2.6 Z" fill="#19994b"/>
<path transform="translate(1194.4 584.6) rotate(45)" d="M-11.2 -11.2 L-2.6 -11.2 A3.0 3.0 0 1 1 2.6 -11.2 L11.2 -11.2 L11.2 -2.6 A3.0 3.0 0 1 1 11.2 2.6 L11.2 11.2 L2.6 11.2 A3.0 3.0 0 1 1 -2.6 11.2 L-11.2 11.2 L-11.2 2.6 A3.0 3.0 0 1 1 -11.2 -2.6 Z" fill="#f6a41a"/>
<path transform="translate(1225.6 584.6) rotate(45)" d="M-11.2 -11.2 L-2.6 -11.2 A3.0 3.0 0 1 1 2.6 -11.2 L11.2 -11.2 L11.2 -2.6 A3.0 3.0 0 1 1 11.2 2.6 L11.2 11.2 L2.6 11.2 A3.0 3.0 0 1 1 -2.6 11.2 L-11.2 11.2 L-11.2 2.6 A3.0 3.0 0 1 1 -11.2 -2.6 Z" fill="#7b3eb1"/>
<path transform="translate(1210.0 600.2) rotate(45)" d="M-11.2 -11.2 L-2.6 -11.2 A3.0 3.0 0 1 1 2.6 -11.2 L11.2 -11.2 L11.2 -2.6 A3.0 3.0 0 1 1 11.2 2.6 L11.2 11.2 L2.6 11.2 A3.0 3.0 0 1 1 -2.6 11.2 L-11.2 11.2 L-11.2 2.6 A3.0 3.0 0 1 1 -11.2 -2.6 Z" fill="#d92020"/>
<g stroke="#8fd8a8" stroke-width="1" fill="none"><circle cx="1210" cy="563" r="2"/><path d="M1205 573l2-5h6l2 5M1203 573h14"/></g>
<g stroke="#fde0a0" stroke-width="1" fill="none"><circle cx="1194" cy="581" r="3"/><path d="M1192 584v5h4v-5"/></g>
<g fill="#fff"><circle cx="1226" cy="581" r="2.3"/><path d="M1221 589q5 -6 10 0z"/></g>
<g stroke="#f8a0a0" stroke-width="1" fill="none"><circle cx="1207" cy="599" r="2.6"/><circle cx="1212.5" cy="600" r="2.6"/></g>
<g fill="none" stroke="#0c0c0c" stroke-width="3.5" stroke-linecap="round" stroke-linejoin="round">
<path d="M1060.5 594.8 L1054 594.8 C1049.8 594.8 1048.6 591.5 1048.6 589 C1048.6 585.6 1051 583.5 1054.5 583.5 C1058.2 583.5 1060.5 586 1060.5 589.5 Z" stroke-linecap="butt" stroke-linejoin="miter"/>
<path d="M1079.3 590 C1079.3 585.8 1077 583.5 1073 583.5 C1069.2 583.5 1067 586 1067 589 C1067 592.2 1069.5 594.3 1073 594.3 C1076.5 594.3 1079.3 592.5 1079.3 589.5 V595 C1079.3 600 1075.5 602.3 1068.8 602.3"/>
<path d="M1089.2 584.6 V595 C1089.2 600 1085.5 602.3 1079.5 602.3"/>
<path d="M1103.8 585.8 V592 C1103.8 595 1101 596.3 1097 596.3 H1089.5"/>
<path d="M1120 584.6 V595 C1120 600 1116.5 602.3 1110 602.3"/>
<path d="M1126.5 574.6 V596.3 H1162 C1167 596.3 1169.6 593 1169.6 589 V585.8"/>
<path d="M1135 585.6 H1150 C1153 585.6 1154.6 588 1154.6 591 V596"/>
<path d="M1135.5 584.6 L1153.6 577.4"/>
<path d="M1137 579.6 L1149.5 574" stroke-width="2.3"/>
</g>
<g fill="#0c0c0c">
<ellipse cx="1087.6" cy="575.0" rx="1.5" ry="2.4" transform="rotate(0 1087.6 575.0)"/>
<ellipse cx="1084.2" cy="578.8" rx="1.5" ry="2.4" transform="rotate(-35 1084.2 578.8)"/>
<ellipse cx="1091.0" cy="578.8" rx="1.5" ry="2.4" transform="rotate(35 1091.0 578.8)"/>
<ellipse cx="1095.0" cy="600.8" rx="1.5" ry="2.4" transform="rotate(35 1095.0 600.8)"/>
<ellipse cx="1101.8" cy="600.8" rx="1.5" ry="2.4" transform="rotate(-35 1101.8 600.8)"/>
<ellipse cx="1098.3" cy="604.6" rx="1.5" ry="2.4" transform="rotate(0 1098.3 604.6)"/>
<ellipse cx="1168.0" cy="580.0" rx="1.5" ry="2.4" transform="rotate(30 1168.0 580.0)"/>
</g>
<text x="1042" y="628.6" font-size="16.2" font-weight="bold" fill="#111">www.NegarPajooh.com</text>
</svg>
<!-- vertical scrollbar -->
<div class="a" style="left:1268px;top:64px;width:12px;height:602px;background:#f0f0f0;border-left:1px solid #dcdcdc"></div>
<svg class="a" style="left:1268px;top:64px" width="12" height="602"><path d="M3 11.5l3-3 3 3z" fill="#333"/><path d="M3 589l3 3 3-3z" fill="#333"/></svg>
<div class="a" style="left:1270px;top:178.5px;width:10px;height:415px;border:1px solid #9aa0a4;border-right:none;border-radius:2px 0 0 2px;background:linear-gradient(90deg,#f6f6f6,#e2e2e2 60%,#d2d2d2)"></div>
<svg class="a" style="left:1272px;top:380px" width="8" height="10"><path d="M0 1.5h8M0 4h8M0 6.5h8" stroke="#444" stroke-width="1"/></svg>
<!-- status bar / horizontal scrollbar -->
<div class="a" style="left:2px;top:664px;width:1278px;height:19px;background:#f0f0f0;border-top:1px solid #e4e4e4"></div>
<div class="a" style="left:2px;top:666px;width:166px;height:15px;background:#fff;border:1.2px solid #222"></div>
<div class="t" style="left:5px;top:668.5px;font-size:11.4px;color:#1a1a1a">Untitled Project 1/My Computer</div>
<svg class="a" style="left:170px;top:666px" width="1110" height="17"><path d="M4 8.5l3.5-3v6z" fill="#555"/><path d="M1088.5 5.5l3.5 3-3.5 3z" fill="#555"/></svg>
<div class="a" style="left:391px;top:667px;width:859px;height:14px;border:1px solid #a0a4a8;border-radius:2px;background:linear-gradient(#f8f8f8,#e6e6e6 55%,#d4d4d4)"></div>
<svg class="a" style="left:815px;top:670px" width="10" height="8"><path d="M1.5 0v8M4 0v8M6.5 0v8" stroke="#444" stroke-width="1"/></svg>
<!-- taskbar -->
<div class="a" style="left:0;top:683px;width:1280px;height:37px;background:linear-gradient(#2a2e32 0,#14181c 4%,#080b0e 30%,#06090c)"></div>
<svg class="a" style="left:0;top:683px" width="1280" height="37" font-family="Liberation Sans">
<defs>
<radialGradient id="orb" cx="50%" cy="70%" r="60%"><stop offset="0" stop-color="#3ac0f0"/><stop offset=".6" stop-color="#1670b8"/><stop offset="1" stop-color="#0a3a70"/></radialGradient>
<linearGradient id="btn" x1="0" y1="0" x2="0" y2="1"><stop offset="0" stop-color="#6a6e72"/><stop offset=".5" stop-color="#3a3e42"/><stop offset="1" stop-color="#24282c"/></linearGradient>
<linearGradient id="btn2" x1="0" y1="0" x2="0" y2="1"><stop offset="0" stop-color="#e6e6e6"/><stop offset=".5" stop-color="#c4c4c4"/><stop offset="1" stop-color="#9a9a9a"/></linearGradient>
</defs>
<rect x="0" y="0" width="1280" height="2" fill="#3c4044"/>
<circle cx="25.3" cy="19.5" r="17" fill="url(#orb)" stroke="#5a8ab0" stroke-width="1"/>
<ellipse cx="25.3" cy="12.5" rx="14" ry="8" fill="#c8dcea" opacity=".55"/>
<path d="M17 10.5 q4 -2 8 0 v7 q-4 -2 -8 0z" fill="#e86a20"/>
<path d="M26 12.5 q4 2 8 0 v7 q-4 2 -8 0z" fill="#8cc040"/>
<path d="M16 18.5 q4 -2 8 0 v7 q-4 -2 -8 0z" fill="#30a0e8"/>
<path d="M25 20.5 q4 2 8 0 v7 q-4 2 -8 0z" fill="#f8c030"/>
<rect x="56.5" y="2.5" width="47" height="34" rx="3" fill="url(#btn)" stroke="#8a8e92" stroke-width="1"/>
<rect x="67" y="10" width="26" height="18" rx="2" fill="#f0d070"/>
<rect x="67" y="14" width="26" height="14" fill="#f8e090"/>
<path d="M71 30v-8h18v8" fill="none" stroke="#4ab0e8" stroke-width="3"/>
<circle cx="72" cy="9" r="1.5" fill="#30a040"/><circle cx="78" cy="10" r="1.5" fill="#e04020"/>
<path d="M106.5 3v33M288.5 3v33M338.5 3v33" stroke="#2a2e32" stroke-width="1"/>
<g transform="rotate(-12 135 10)"><rect x="129" y="6" width="26" height="6" fill="#fff"/><path d="M132 6l3 6M138 6l3 6M144 6l3 6M150 6l3 6" stroke="#222" stroke-width="2.5"/></g>
<rect x="129.5" y="13" width="26" height="17" fill="#fafafa"/>
<text x="131" y="28" font-size="13" font-weight="bold" fill="#e06020">3</text><text x="139" y="28" font-size="13" font-weight="bold" fill="#3080d0">2</text><text x="147" y="28" font-size="13" font-weight="bold" fill="#40a040">1</text>
<circle cx="199" cy="18" r="14" fill="#3a3aa0"/><circle cx="199" cy="14" rx="12" r="11" fill="#5a5ab8" opacity=".6"/>
<path d="M191 24h17l-2 4h-13z" fill="#fff"/><path d="M193 22v-12M199 22v-14M205 22v-11" stroke="#fff" stroke-width="1"/><path d="M194 10h4v11h-4zM200 9h4v12h-4z" fill="#fff" opacity=".9"/>
<g transform="translate(259,18.5)"><circle r="14" fill="#db4437"/><path d="M0 0 L12.1 7 A14 14 0 0 1 -12.1 7z" fill="#0f9d58"/><path d="M0 0 L0 -14 A14 14 0 0 1 12.1 7z" fill="#f4b400"/><path d="M0 0 L-12.1 7 A14 14 0 0 1 0 -14 L0 -7z" fill="#db4437"/><circle r="6.5" fill="#fff"/><circle r="5" fill="#4285f4"/></g>
<rect x="290.5" y="2.5" width="47" height="34" rx="3" fill="url(#btn2)" stroke="#b0b4b8" stroke-width="1"/>
<rect x="301" y="6" width="27" height="27" fill="#fafafa" stroke="#bbb" stroke-width=".6"/>
<path d="M302 15h8M302 21h8" stroke="#6ab0d8" stroke-width="1.5"/>
<path d="M309 8l16 10-16 10z" fill="#f0d020" stroke="#222" stroke-width="1.2"/>
<path d="M315 18h5M317.5 15.5v5" stroke="#222" stroke-width="1.5"/>
<text x="319" y="33" font-size="7" font-weight="bold" fill="#222">14</text>
<circle cx="378" cy="15" r="10" fill="#3a8ad0"/><path d="M370 12q6 -6 14 0M372 20q6 -4 12 0" stroke="#50b050" stroke-width="3" fill="none"/>
<path d="M362 22q6 -14 20 -4l3-3 2 12-12 -1 3 -3q-10 -6 -16 -1z" fill="#e8a020"/>
<path d="M374 18l14 6-6 2 4 6-2 1-4-6-5 3z" fill="#2a9a30"/>
<rect x="420" y="4" width="22" height="27" fill="#fff" stroke="#aaa" stroke-width=".8"/><path d="M430 22h12M430 26h12" stroke="#c8c8d8" stroke-width="1.5"/>
<text x="421" y="23" font-size="17" font-weight="bold" fill="#2850a8">W</text>
<circle cx="492" cy="18.5" r="14" fill="#2a9ed8"/><path d="M484 18l15-6-3 14-5-4-2 3v-4l6-5-8 4z" fill="#fff"/>
<circle cx="550" cy="18.5" r="15" fill="#3aa04a"/><path d="M543 14l13-4-5 14z" fill="none" stroke="#fff" stroke-width="1.6" stroke-linejoin="round"/><circle cx="543" cy="14" r="1.6" fill="#fff"/><circle cx="556" cy="10" r="1.6" fill="#fff"/><circle cx="551" cy="24" r="1.6" fill="#fff"/>
<rect x="583.5" y="2.5" width="52" height="34" rx="3" fill="url(#btn)" stroke="#6a6e72" stroke-width="1"/>
<g transform="rotate(-15 605 17)"><rect x="596" y="9" width="14" height="14" fill="#a8d8a0"/></g><rect x="600" y="12" width="13" height="14" fill="#a0c8e8"/><g transform="rotate(12 615 20)"><rect x="606" y="11" width="16" height="17" fill="#f8e070"/></g>
<rect x="641.5" y="2.5" width="52" height="34" rx="3" fill="url(#btn)" stroke="#6a6e72" stroke-width="1"/>
<circle cx="671" cy="13.5" r="9" fill="#2040a0" stroke="#d8c840" stroke-width="2"/><path d="M665 10l6 4 4-6" stroke="#fff" stroke-width="1.5" fill="none"/><path d="M664.5 20l-9 12" stroke="#ddd" stroke-width="2.5" stroke-linecap="round"/>
<text x="1066" y="21" font-size="11" fill="#e4e4e4">EN</text>
<path d="M1096 20.5l4-4 4 4z" fill="#e8e8e8"/>
<path d="M1117 11v16" stroke="#ccc" stroke-width="1.3"/><path d="M1118 11h8v7h-8z" fill="#ddd"/><circle cx="1126" cy="23.5" r="4.2" fill="#d83020"/><path d="M1124 21.5l4 4M1128 21.5l-4 4" stroke="#fff" stroke-width="1"/>
<rect x="1139" y="12" width="9" height="13" fill="#d83020"/><path d="M1142 11h8v5h-8z" fill="#ccc"/><path d="M1146 10v2M1150 10v2" stroke="#ddd"/>
<path d="M1161 23v2M1164 21v4M1167 19v6M1170 17v8M1173 15v10" stroke="#ddd" stroke-width="1.6"/>
<path d="M1184 15h3l5-4v16l-5-4h-3z" fill="#ddd"/><circle cx="1193" cy="23" r="4.5" fill="#d83020"/><path d="M1190 25.5l6-5" stroke="#fff" stroke-width="1.2"/>
<text x="1238.5" y="16.5" font-size="10.8" fill="#f0f0f0" text-anchor="middle">10:49 PM</text>
<text x="1238" y="32.5" font-size="10.8" fill="#f0f0f0" text-anchor="middle">3/25/2021</text>
<rect x="1273.5" y="3" width="8" height="35" rx="1" fill="#3a3e42" stroke="#6a6e72"/>
</svg>
</body></html>
